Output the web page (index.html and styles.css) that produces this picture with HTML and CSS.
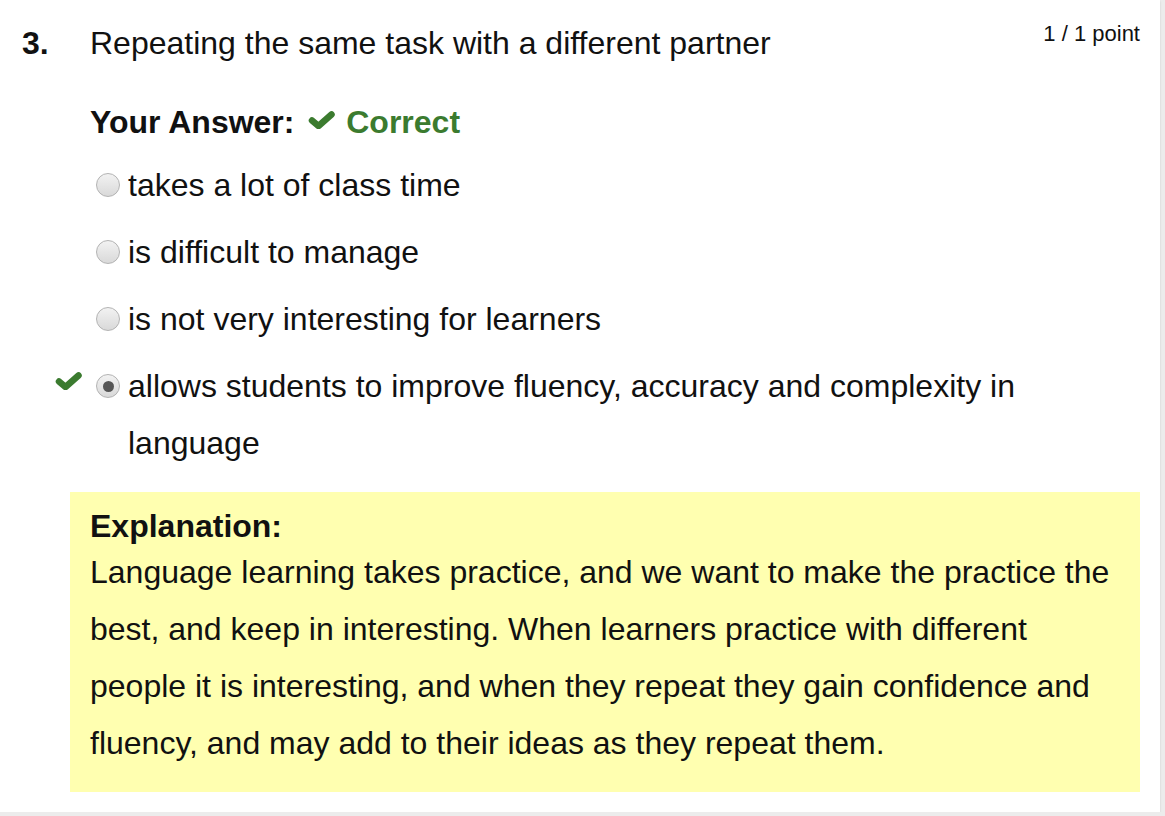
FILE: index.html
```html
<!DOCTYPE html>
<html lang="en">
    <head>
        <meta charset="UTF-8" />
        <meta name="viewport" content="width=device-width, initial-scale=1.0" />
        <title>Quiz feedback</title>
        <link rel="stylesheet" href="styles.css">
    </head>
    <body>
        <div class="card">
            <div class="question">
                <div class="q-number">3.</div>
                <div class="q-body">
                    <div class="q-head">
                        <h2 class="q-title">Repeating the same task with a different partner</h2>
                        <span class="points">1 / 1 point</span>
                    </div>

                    <div class="answer-label">
                        Your Answer:
                        <svg class="check check-inline" width="27" height="18" viewBox="0 0 27 18">
                            <polyline points="4,9.5 10.5,15 23.5,3.5" />
                        </svg>
                        <span class="correct">Correct</span>
                    </div>

                    <ul class="options">
                        <li class="option">
                            <span class="mark"></span>
                            <span class="radio"></span>
                            <span class="option-text">takes a lot of class time</span>
                        </li>
                        <li class="option">
                            <span class="mark"></span>
                            <span class="radio"></span>
                            <span class="option-text">is difficult to manage</span>
                        </li>
                        <li class="option">
                            <span class="mark"></span>
                            <span class="radio"></span>
                            <span class="option-text">is not very interesting for learners</span>
                        </li>
                        <li class="option">
                            <span class="mark">
                                <svg class="check" width="27" height="18" viewBox="0 0 27 18">
                                    <polyline points="4,9.5 10.5,15 23.5,3.5" />
                                </svg>
                            </span>
                            <span class="radio checked"></span>
                            <span class="option-text">allows students to improve fluency, accuracy and complexity in language</span>
                        </li>
                    </ul>

                    <div class="explanation">
                        <div class="explanation-title">Explanation:</div>
                        <p class="explanation-text">
                            Language learning takes practice, and we want to make the practice the best, and keep in interesting. When learners practice with different people it is interesting, and when they repeat they gain confidence and fluency, and may add to their ideas as they repeat them.
                        </p>
                    </div>
                </div>
            </div>
        </div>
    </body>
</html>
```

FILE: styles.css
```css
body {
    margin: 0;
    background: #ececec;
    color: #111;
    font-family: 'Liberation Sans', Arial, sans-serif;
    font-size: 32px;
}

.card {
    width: 1160px;
    box-sizing: border-box;
    padding: 15px 20px 20px 22px;
    background: white;
    box-shadow: 0 1px 2px rgba(0, 0, 0, 0.12);
}

.question {
    display: grid;
    grid-template-columns: 68px 1fr;
}

.q-number {
    font-weight: bold;
    line-height: 57px;
}

.q-head {
    display: flex;
    align-items: flex-start;
}
.q-title {
    margin: 0;
    font-size: 32px;
    font-weight: normal;
    line-height: 57px;
}
.points {
    margin-left: auto;
    margin-top: 4px;
    font-size: 22px;
    line-height: 30px;
    flex-shrink: 0;
}

.answer-label {
    margin-top: 22px;
    font-weight: bold;
    line-height: 57px;
}
.check polyline {
    fill: none;
    stroke: #3b7b2f;
    stroke-width: 6.5;
    stroke-linecap: round;
    stroke-linejoin: round;
}
.check-inline {
    margin-left: 5px;
    vertical-align: 4px;
}
.correct {
    margin-left: 2px;
    color: #3b7b2f;
}

.options {
    list-style: none;
    margin: 6px 0 0;
    padding: 0;
    display: flex;
    flex-direction: column;
    gap: 10px;
}
.option {
    display: flex;
    align-items: flex-start;
    line-height: 57px;
    margin-left: -35px;
}
.mark {
    width: 35px;
    flex-shrink: 0;
}
.mark .check {
    display: block;
    margin: 14px 0 0 0;
}
.radio {
    width: 22px;
    height: 22px;
    margin: 16px 8px 0 6px;
    flex-shrink: 0;
    border: 1px solid #b3b3b3;
    border-radius: 50%;
    background: linear-gradient(#f2f2f2, #d9d9d9);
    box-sizing: content-box;
    position: relative;
}
.radio.checked::after {
    content: '';
    position: absolute;
    left: 5.5px;
    top: 5.5px;
    width: 11px;
    height: 11px;
    border-radius: 50%;
    background: #555;
}

.explanation {
    margin: 20px 0 0 -20px;
    padding: 17px 20px 20px;
    background: #ffffb0;
}
.explanation-title {
    font-weight: bold;
    line-height: 35px;
}
.explanation-text {
    margin: 0;
    line-height: 57px;
}
```
